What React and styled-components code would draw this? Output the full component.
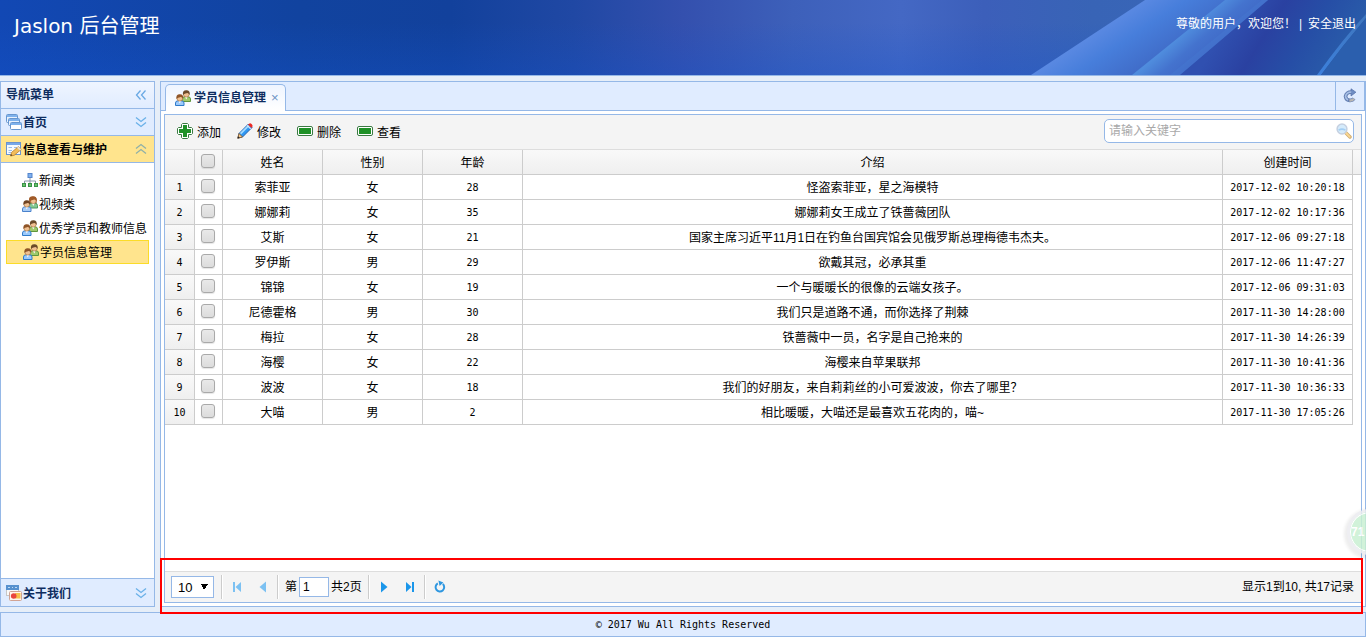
import React, { useState } from "react";
import styled, { createGlobalStyle, css } from "styled-components";

const blue = "#95b8e7";
const pale = "#e0ecff";
const mono = `"DejaVu Sans Mono", "Noto Sans CJK SC", monospace`;

const nodes = [
  { text: "新闻类", icon: "sitemap" },
  { text: "视频类", icon: "couple" },
  { text: "优秀学员和教师信息", icon: "users" },
  { text: "学员信息管理", icon: "users" }
];

const students = [
  ["索菲亚", "女", 28, "怪盗索菲亚，星之海模特", "2017-12-02 10:20:18"],
  ["娜娜莉", "女", 35, "娜娜莉女王成立了铁蔷薇团队", "2017-12-02 10:17:36"],
  ["艾斯", "女", 21, "国家主席习近平11月1日在钓鱼台国宾馆会见俄罗斯总理梅德韦杰夫。", "2017-12-06 09:27:18"],
  ["罗伊斯", "男", 29, "欲戴其冠，必承其重", "2017-12-06 11:47:27"],
  ["锦锦", "女", 19, "一个与暖暖长的很像的云端女孩子。", "2017-12-06 09:31:03"],
  ["尼德霍格", "男", 30, "我们只是道路不通，而你选择了荆棘", "2017-11-30 14:28:00"],
  ["梅拉", "女", 28, "铁蔷薇中一员，名字是自己抢来的", "2017-11-30 14:26:39"],
  ["海樱", "女", 22, "海樱来自苹果联邦", "2017-11-30 10:41:36"],
  ["波波", "女", 18, "我们的好朋友，来自莉莉丝的小可爱波波，你去了哪里？", "2017-11-30 10:36:33"],
  ["大喵", "男", 2, "相比暖暖，大喵还是最喜欢五花肉的，喵~", "2017-11-30 17:05:26"]
];

const Person = ({ x, y, hair, shirt, edge }) => (
  <g transform={`translate(${x} ${y})`}>
    <path d="M0.5 11.5V9Q0.5 6.8 3 6.8H6.5Q9 6.8 9 9V11.5Z" fill={shirt} stroke={edge} />
    <path d="M3.4 6.6H6.2L4.8 9.4Z" fill="#fff" />
    <circle cx="4.8" cy="4.2" r="2.9" fill="#f0c192" stroke="#a06a3a" strokeWidth="0.6" />
    <path d="M1.5 5Q0.6 0.2 4.8 0.2Q9 0.2 8.1 5L7 3.4Q5.8 2.8 4.2 3.4Q2.8 3.2 1.5 5Z" fill={hair} />
  </g>
);

const drawings = {
  sitemap: (
    <g>
      <path d="M8 6V9M2.5 11V9H13.5V11M8 9V11" fill="none" stroke="#8a97a8" />
      <rect x="6" y="1.5" width="4" height="4" fill="#7fb0ee" stroke="#5585cc" />
      <rect x="0.5" y="11.5" width="3" height="3" fill="#6cc06c" stroke="#389447" />
      <rect x="6.5" y="11.5" width="3" height="3" fill="#6cc06c" stroke="#389447" />
      <rect x="12.5" y="11.5" width="3" height="3" fill="#6cc06c" stroke="#389447" />
    </g>
  ),
  couple: (
    <g>
      <path d="M7 3Q7.4 0 10.8 0.2Q15 0 14.6 4V9H7.5Z" fill="#a05a28" />
      <Person x={6.5} y={0.5} hair="#a05a28" shirt="#83c792" edge="#4d9a60" />
      <Person x={0} y={4} hair="#6f4322" shirt="#a9cdf6" edge="#4a82cc" />
    </g>
  ),
  users: (
    <g>
      <Person x={6.5} y={0} hair="#6b4a2a" shirt="#9fc96b" edge="#5f963d" />
      <Person x={0} y={4} hair="#8f5527" shirt="#9bc9fb" edge="#2f7ac9" />
    </g>
  ),
  windows: (
    <g stroke="#6796cf">
      <rect x="0.5" y="0.5" width="11" height="8" rx="1" fill="#e9f2fd" />
      <path d="M1 2H11" stroke="#7fb2ec" strokeWidth="2" />
      <rect x="2.5" y="4.5" width="11" height="7" rx="1" fill="#e9f2fd" />
      <path d="M3 6H13" stroke="#7fb2ec" strokeWidth="2" />
      <rect x="4.5" y="8.5" width="11" height="7" rx="1" fill="#fff" />
      <path d="M5 10H15" stroke="#7fb2ec" strokeWidth="2" />
    </g>
  ),
  form: (
    <g>
      <rect x="0.5" y="1.5" width="14" height="12" fill="#f5faff" stroke="#6a93cf" />
      <path d="M1 3H14" stroke="#78a8e8" strokeWidth="2" />
      <path d="M2.5 6.5H6M8 6.5H12M2.5 9.5H6M2.5 11.5H5" stroke="#9cbce6" />
      <path d="M4.5 15L5.6 11.4L12.4 5.6L15.3 8.4L8.2 14.3Z" fill="#f2bd5a" stroke="#b67c2b" strokeWidth="0.8" />
      <path d="M12.4 5.6L15.3 8.4L13.8 9.6L11 6.8Z" fill="#e9e1d4" />
      <path d="M4.5 15L5 13L6.4 14.4Z" fill="#5a4020" />
    </g>
  ),
  about: (
    <g>
      <rect x="0.5" y="0.5" width="12" height="10" fill="#fafafa" stroke="#c7c7c7" />
      <path d="M0 2.5H13" stroke="#5791cf" strokeWidth="5" />
      <path d="M2 2.5H4M6 2.5H7M9 2.5H11" stroke="#bcd9f4" />
      <rect x="3.5" y="6.5" width="12" height="9" rx="1" fill="#fff6ee" stroke="#d1a393" />
      <rect x="9" y="8" width="5.5" height="5.5" fill="#f6c04c" />
      <circle cx="7.7" cy="11" r="2.8" fill="#e9453e" />
    </g>
  ),
  add: (
    <g>
      <path d="M5.5 0.5H10.5L11.5 1.5V4.5H14.5L15.5 5.5V10.5L14.5 11.5H11.5V14.5L10.5 15.5H5.5L4.5 14.5V11.5H1.5L0.5 10.5V5.5L1.5 4.5H4.5V1.5Z" fill="#fff" stroke="#3b7a43" />
      <path d="M6 2H10V6H14V10H10V14H6V10H2V6H6Z" fill="#1f9127" />
    </g>
  ),
  edit: (
    <g>
      <path d="M1 15L2 10.5L11.5 1L15 4.5L5.5 14Z" fill="#2f97f2" stroke="#1f62b0" />
      <path d="M3.6 10.6L11.6 2.6" stroke="#a4dbff" strokeWidth="1.8" />
      <path d="M11 1.5L12.5 0.4Q13.5 0 14.8 1.2Q16 2.6 15.4 3.6L14.4 4.9Z" fill="#ec2a24" />
      <path d="M10.2 2.3L13.7 5.8" stroke="#dfe8f4" strokeWidth="1.2" />
      <path d="M0.7 15.3L2 10.5L5.5 14Z" fill="#f4cb8d" stroke="#8a5523" strokeWidth="0.8" />
      <path d="M0.5 15.5L1.2 13.2L2.8 14.8Z" fill="#222" />
    </g>
  ),
  remove: (
    <g>
      <rect x="0.5" y="3.5" width="15" height="9" rx="1.5" fill="#fff" stroke="#3b7a43" />
      <rect x="2" y="5" width="12" height="6" fill="#1f9127" />
    </g>
  ),
  search: (
    <g>
      <path d="M9.5 9.5L14 14" stroke="#c2964d" strokeWidth="3.4" strokeLinecap="round" />
      <path d="M10 10L13.8 13.8" stroke="#fbcf77" strokeWidth="1.8" strokeLinecap="round" />
      <circle cx="6" cy="6" r="4.9" fill="#cbe7fb" stroke="#b7c5da" strokeWidth="1.5" />
      <path d="M2.6 7.2Q6 5 9.4 7.2" fill="none" stroke="#8dc3f2" strokeWidth="1.6" />
    </g>
  ),
  reload: (
    <g>
      <path d="M9.4 4Q4.4 4 3.5 8.4Q4 12.6 8.2 12.4Q10.8 12.4 12 10.6" fill="none" stroke="#6580b4" strokeWidth="3.6" />
      <path d="M9 0.8L13.9 4.2L9 8Z" fill="#6e8dc3" stroke="#536fa5" strokeWidth="0.7" />
      <path d="M9.4 4Q4.4 4 3.5 8.4Q3.8 11 6 12" fill="none" stroke="#a9c1e6" strokeWidth="1.6" />
      <path d="M7.4 12.4Q10.4 12.8 12 10.6" fill="none" stroke="#b9b6b3" strokeWidth="2.4" />
    </g>
  ),
  left: <path d="M7.5 3.5L3.5 8L7.5 12.5M12.5 3.5L8.5 8L12.5 12.5" fill="none" stroke="#69a9e4" strokeWidth="1.3" />,
  down: <path d="M3 3.5L8 7.5L13 3.5M3 8.5L8 12.5L13 8.5" fill="none" stroke="#69b0e8" strokeWidth="1.3" />,
  up: <path d="M3 7.5L8 3.5L13 7.5M3 12.5L8 8.5L13 12.5" fill="none" stroke="#8fb0a8" strokeWidth="1.3" />,
  first: <path d="M4 3H6V13H4ZM12 3V13L6.5 8Z" fill="#7cc1f2" />,
  prev: <path d="M11 2.5V13.5L4.5 8Z" fill="#7cc1f2" />,
  next: <path d="M5 2.5V13.5L11.5 8Z" fill="#1a96ea" />,
  last: <path d="M4 3V13L9.5 8ZM10 3H12V13H10Z" fill="#1a96ea" />,
  refresh: (
    <g>
      <path d="M10.8 5A4.3 4.3 0 1 1 5.8 4.4" fill="none" stroke="#2e97e0" strokeWidth="2" />
      <path d="M6.4 1.6L11.4 3.4L7.6 7Z" fill="#2e97e0" />
    </g>
  )
};

const Icon = ({ name }) => (
  <Glyph viewBox="0 0 16 16" aria-hidden="true">
    {drawings[name]}
  </Glyph>
);

const HeaderArt = () => (
  <Art viewBox="0 0 366 75" aria-hidden="true">
    <defs>
      <linearGradient id="beam1" gradientUnits="userSpaceOnUse" x1="86" y1="38" x2="138" y2="117">
        <stop offset="0" stopColor="#5a89e2" />
        <stop offset="0.25" stopColor="#477edb" />
        <stop offset="0.6" stopColor="#406cc8" />
        <stop offset="1" stopColor="#3b66bd" />
      </linearGradient>
      <linearGradient id="beam2" gradientUnits="userSpaceOnUse" x1="176" y1="40" x2="205" y2="74">
        <stop offset="0" stopColor="#4f8cdd" />
        <stop offset="0.35" stopColor="#4473ce" />
        <stop offset="1" stopColor="#3c61c0" />
      </linearGradient>
      <linearGradient id="dark" gradientUnits="userSpaceOnUse" x1="215" y1="45" x2="320" y2="110">
        <stop offset="0" stopColor="#3050b0" />
        <stop offset="0.3" stopColor="#2a41a1" />
        <stop offset="0.6" stopColor="#264ea6" />
        <stop offset="1" stopColor="#2a5faa" />
      </linearGradient>
      <linearGradient id="line" x1="0" y1="1" x2="1" y2="0">
        <stop offset="0" stopColor="#3c80dc" />
        <stop offset="1" stopColor="#3f76bd" />
      </linearGradient>
    </defs>
    <path d="M31 75L145 0H230L134 75Z" fill="url(#beam1)" />
    <path d="M132 75L225 0H270L180 75Z" fill="url(#beam2)" />
    <path d="M180 75L268 0H366V75Z" fill="url(#dark)" />
    <path d="M180 75L268 0H262L170 75Z" fill="#477bd2" opacity="0.4" />
    <path d="M317 75Q342 40 366 14V18Q343 45 321 75Z" fill="url(#line)" />
    <path d="M321 75Q343 45 366 18V75Z" fill="#2b5fae" />
  </Art>
);

export default function App() {
  const [active, setActive] = useState(3);
  const [keyword, setKeyword] = useState("");
  const [page, setPage] = useState("1");

  return (
    <Page lang="zh-CN">
      <Global />
      <Header>
        <HeaderArt />
        <Title>Jaslon 后台管理</Title>
        <Welcome>
          <span>尊敬的用户，欢迎您！</span>
          <Bar>|</Bar>
          <Logout href="#logout">安全退出</Logout>
        </Welcome>
      </Header>

      <Body>
        <Sidebar>
          <SideTitle>
            <span>导航菜单</span>
            <button aria-label="收起">
              <Icon name="left" />
            </button>
          </SideTitle>
          <Fold>
            <Icon name="windows" />
            <FoldText>首页</FoldText>
            <Icon name="down" />
          </Fold>
          <Fold $open>
            <Icon name="form" />
            <FoldText>信息查看与维护</FoldText>
            <Icon name="up" />
          </Fold>
          <Tree>
            {nodes.map((n, i) => (
              <li key={n.text}>
                <Node href="#node" $active={i === active} onClick={() => setActive(i)}>
                  <Icon name={n.icon} />
                  <NodeText>{n.text}</NodeText>
                </Node>
              </li>
            ))}
          </Tree>
          <Fold $last>
            <Icon name="about" />
            <FoldText>关于我们</FoldText>
            <Icon name="down" />
          </Fold>
        </Sidebar>

        <Main>
          <TabStrip>
            <Tab>
              <Icon name="users" />
              <TabText>学员信息管理</TabText>
              <Close aria-label="关闭">×</Close>
            </Tab>
            <Reload aria-label="刷新">
              <Icon name="reload" />
            </Reload>
          </TabStrip>
          <Content>
            <Grid>
              <Toolbar>
                <Tool><Icon name="add" />添加</Tool>
                <Tool><Icon name="edit" />修改</Tool>
                <Tool><Icon name="remove" />删除</Tool>
                <Tool><Icon name="remove" />查看</Tool>
                <SearchBox>
                  <SearchInput
                    aria-label="关键字"
                    placeholder="请输入关键字"
                    value={keyword}
                    onChange={e => setKeyword(e.target.value)}
                  />
                  <SearchButton aria-label="搜索">
                    <Icon name="search" />
                  </SearchButton>
                </SearchBox>
              </Toolbar>
              <Scroll>
                <Table>
                  <colgroup>
                    <Col $w={30} />
                    <Col $w={28} />
                    <Col $w={100} />
                    <Col $w={100} />
                    <Col $w={100} />
                    <col />
                    <Col $w={130} />
                    <Col $w={8} />
                  </colgroup>
                  <thead>
                    <tr>
                      <Th />
                      <Th><Check aria-label="全选" /></Th>
                      <Th>姓名</Th>
                      <Th>性别</Th>
                      <Th>年龄</Th>
                      <Th>介绍</Th>
                      <Th>创建时间</Th>
                      <Th $end />
                    </tr>
                  </thead>
                  <tbody>
                    {students.map((s, i) => (
                      <tr key={s[0]}>
                        <Num>{i + 1}</Num>
                        <Td><Check aria-label={s[0]} /></Td>
                        {s.map((v, k) => (
                          <Td key={k} $mono={k === 2 || k === 4}>{v}</Td>
                        ))}
                      </tr>
                    ))}
                  </tbody>
                </Table>
              </Scroll>
              <Pager>
                <PageSize aria-label="每页条数" defaultValue="10">
                  <option>10</option>
                  <option>20</option>
                </PageSize>
                <Sep />
                <PageButton aria-label="首页" disabled><Icon name="first" /></PageButton>
                <PageButton aria-label="上一页" disabled><Icon name="prev" /></PageButton>
                <Sep />
                <PageLabel>
                  第
                  <PageInput value={page} onChange={e => setPage(e.target.value)} />
                  共2页
                </PageLabel>
                <Sep />
                <PageButton aria-label="下一页"><Icon name="next" /></PageButton>
                <PageButton aria-label="末页"><Icon name="last" /></PageButton>
                <Sep />
                <PageButton aria-label="刷新"><Icon name="refresh" /></PageButton>
                <Info>显示1到10, 共17记录</Info>
              </Pager>
            </Grid>
          </Content>
          <Bubble>71</Bubble>
          <Marker />
        </Main>
      </Body>

      <Footer>© 2017 Wu All Rights Reserved</Footer>
    </Page>
  );
}

const Global = createGlobalStyle`
  * {
    box-sizing: border-box;
  }
  body {
    margin: 0;
    overflow: hidden;
  }
  body, button, input, select {
    font-family: "Liberation Sans", "Noto Sans CJK SC", sans-serif;
    font-size: 12px;
    color: #000;
  }
  button {
    display: flex;
    align-items: center;
    padding: 0;
    border: 0;
    background: none;
    cursor: pointer;
  }
`;

const Page = styled.div`
  display: flex;
  flex-direction: column;
  height: 100vh;
  background: #e6eef8;
  line-height: 16px;
`;

const Glyph = styled.svg`
  flex: none;
  display: block;
  width: 16px;
  height: 16px;
`;

/* header */
const Header = styled.header`
  position: relative;
  flex: none;
  display: flex;
  justify-content: space-between;
  height: 76px;
  padding: 14px 10px 0 14px;
  border-bottom: 1px solid ${blue};
  color: #fff;
  background:
    linear-gradient(180deg, rgba(10, 70, 190, 0) 30%, rgba(20, 84, 205, 0.3) 100%),
    linear-gradient(90deg, #1248b4 0%, #11439f 22%, #12419c 33%, #2048a4 42%, #3450ae 50%, #3d60ba 58%, #4468c4 66%, #3c5fba 72%, #3864b6 80%, #3a6abb 100%);
`;

const Art = styled.svg`
  position: absolute;
  top: 0;
  right: 0;
  width: 366px;
  height: 75px;
`;

const Title = styled.h1`
  margin: 0;
  font: 20px/24px "DejaVu Sans", "Noto Sans CJK SC", sans-serif;
`;

const Welcome = styled.div`
  position: relative;
  display: flex;
  padding-top: 2px;
`;

const Bar = styled.span`
  width: 12px;
  padding-left: 3px;
`;

const Logout = styled.a`
  color: #fff;
  text-decoration: none;
`;

const Body = styled.div`
  flex: 1;
  display: flex;
  gap: 5px;
  min-height: 0;
  padding: 5px 0;
`;

/* sidebar */
const Sidebar = styled.nav`
  flex: none;
  display: flex;
  flex-direction: column;
  width: 155px;
  border: 1px solid ${blue};
  background: #fff;
`;

const SideTitle = styled.div`
  flex: none;
  display: flex;
  align-items: center;
  justify-content: space-between;
  height: 27px;
  padding: 0 5px;
  border-bottom: 1px solid ${blue};
  background: linear-gradient(#eff5ff, ${pale});
  font-weight: bold;
  color: #0e2d5f;
`;

const Fold = styled.button`
  flex: none;
  height: 27px;
  padding: 0 5px;
  border-bottom: 1px solid ${blue};
  background: ${pale};
  font-weight: bold;
  color: #0e2d5f;
  text-align: left;

  ${p => p.$open && css`
    background: #ffe48d;
    color: #000;
  `}
  ${p => p.$last && css`
    height: 28px;
    border-top: 1px solid ${blue};
    border-bottom: 0;
  `}
`;

const FoldText = styled.span`
  flex: 1;
  margin-left: 1px;
  padding-bottom: 1px;
`;

const Tree = styled.ul`
  flex: 1;
  margin: 0;
  padding: 5px;
  list-style: none;
  overflow: hidden;
`;

const Node = styled.a`
  display: flex;
  align-items: center;
  gap: 1px;
  height: 24px;
  padding-left: 16px;
  color: #000;
  text-decoration: none;
  white-space: nowrap;

  ${p => p.$active && css`
    border: 1px solid #fbdc28;
    background: #ffe48d;
  `}
`;

const NodeText = styled.span`
  padding-top: 2px;
`;

/* tabs */
const Main = styled.main`
  position: relative;
  flex: 1;
  display: flex;
  flex-direction: column;
  min-width: 0;
  border: 1px solid ${blue};
  background: #fff;
`;

const TabStrip = styled.div`
  flex: none;
  display: flex;
  align-items: flex-end;
  justify-content: space-between;
  height: 29px;
  padding-left: 4px;
  border-bottom: 1px solid ${blue};
  background: ${pale};
`;

const Tab = styled.div`
  display: flex;
  align-items: center;
  height: 27px;
  margin-bottom: -1px;
  padding: 0 6px 0 9px;
  border: 1px solid ${blue};
  border-bottom: 0;
  border-radius: 5px 5px 0 0;
  background: linear-gradient(#eff5ff, #fff);
  font-weight: bold;
  color: #0e2d5f;
`;

const TabText = styled.span`
  margin: 0 5px 0 3px;
`;

const Close = styled.button`
  font-size: 13px;
  line-height: 16px;
  color: #6c93c4;
`;

const Reload = styled.button`
  align-self: stretch;
  padding: 0 6px;
  border-left: 1px solid ${blue};
  border-right: 1px solid ${blue};
`;

const Content = styled.div`
  flex: 1;
  display: flex;
  min-height: 0;
  padding: 3px;
`;

/* data grid */
const Grid = styled.section`
  flex: 1;
  display: flex;
  flex-direction: column;
  min-width: 0;
  border: 1px solid ${blue};
`;

const Toolbar = styled.div`
  flex: none;
  display: flex;
  align-items: center;
  height: 35px;
  padding: 0 7px 2px 4px;
  border-bottom: 1px solid #ddd;
  background: #f4f4f4;
`;

const Tool = styled.button`
  gap: 4px;
  padding: 0 8px;
`;

const SearchBox = styled.div`
  display: flex;
  align-items: center;
  width: 250px;
  height: 24px;
  margin-left: auto;
  padding: 0 1px 0 4px;
  border: 1px solid ${blue};
  border-radius: 5px;
  background: #fff;
`;

const SearchInput = styled.input`
  flex: 1;
  min-width: 0;
  padding: 0;
  border: 0;
  outline: 0;
  background: none;

  &::placeholder {
    color: #a9a9a9;
  }
`;

const SearchButton = styled.button`
  opacity: .8;
`;

const Scroll = styled.div`
  flex: 1;
  min-height: 0;
  overflow: hidden;
`;

const Table = styled.table`
  width: 100%;
  table-layout: fixed;
  border-collapse: separate;
  border-spacing: 0;
`;

const Col = styled.col`
  width: ${p => p.$w}px;
`;

const cell = css`
  height: 25px;
  padding: 2px 0 0;
  border: solid #ccc;
  border-width: 0 1px 1px 0;
  font-weight: normal;
  text-align: center;
  white-space: nowrap;
`;

const Th = styled.th`
  ${cell}
  background: linear-gradient(#f9f9f9, #efefef);
  ${p => p.$end && "border-right: 0;"}
`;

const Td = styled.td`
  ${cell}
  ${p => p.$mono && css`
    font-family: ${mono};
    font-size: 10px;
  `}
`;

const Num = styled.td`
  ${cell}
  background: linear-gradient(#f9f9f9, #efefef);
  font-family: ${mono};
  font-size: 10px;
`;

const Check = styled.input.attrs({ type: "checkbox" })`
  appearance: none;
  display: block;
  width: 14px;
  height: 14px;
  margin: 0 auto 4px 6px;
  border: 1px solid #a9a9a9;
  border-radius: 3px;
  background: linear-gradient(#e9e9e9, #dcdcdc);
  box-shadow: 0 1px 1px rgba(0, 0, 0, .1);

  &:checked {
    background: #6d9fe0;
  }
`;

/* pager */
const Pager = styled.div`
  flex: none;
  display: flex;
  align-items: center;
  height: 31px;
  padding: 0 7px 0 6px;
  border-top: 1px solid #ddd;
  background: #f4f4f4;
`;

const PageSize = styled.select`
  width: 43px;
  height: 22px;
  margin-right: 6px;
  padding: 0 6px;
  border: 1px solid ${blue};
  border-radius: 0;
  appearance: none;
  font-size: 13px;
  background:
    linear-gradient(to bottom right, #000 50%, transparent 50%) 32px 7px / 4px 6px no-repeat,
    linear-gradient(to bottom left, #000 50%, transparent 50%) 29px 7px / 3px 6px no-repeat,
    #fff;
`;

const Sep = styled.span`
  width: 2px;
  height: 24px;
  margin: 0 1px;
  border-left: 1px solid #ccc;
  border-right: 1px solid #fff;
`;

const PageButton = styled.button`
  justify-content: center;
  width: 26px;
  height: 26px;
`;

const PageLabel = styled.label`
  display: flex;
  align-items: center;
  gap: 2px;
  padding: 0 5px;
`;

const PageInput = styled.input`
  width: 30px;
  height: 20px;
  padding: 0 3px;
  border: 1px solid ${blue};
`;

const Info = styled.span`
  margin-left: auto;
`;

/* floating things */
const Bubble = styled.div`
  position: absolute;
  right: -28px;
  bottom: 51px;
  width: 46px;
  height: 46px;
  padding-left: 1px;
  border: 3px solid #ececf0;
  border-radius: 50%;
  background: #c9f0d3;
  box-shadow: 0 0 0 1px #fff inset, -1px 2px 3px 2px rgba(0, 0, 0, .08);
  font-weight: bold;
  line-height: 40px;
  color: #fff;
  opacity: .85;
`;

const Marker = styled.div`
  position: absolute;
  left: -1px;
  right: 2px;
  bottom: -8px;
  height: 56px;
  border: 2px solid #f00;
  pointer-events: none;
`;

const Footer = styled.footer`
  flex: none;
  height: 25px;
  border: 1px solid ${blue};
  background: ${pale};
  font-family: ${mono};
  font-size: 10px;
  line-height: 24px;
  text-align: center;
`;
